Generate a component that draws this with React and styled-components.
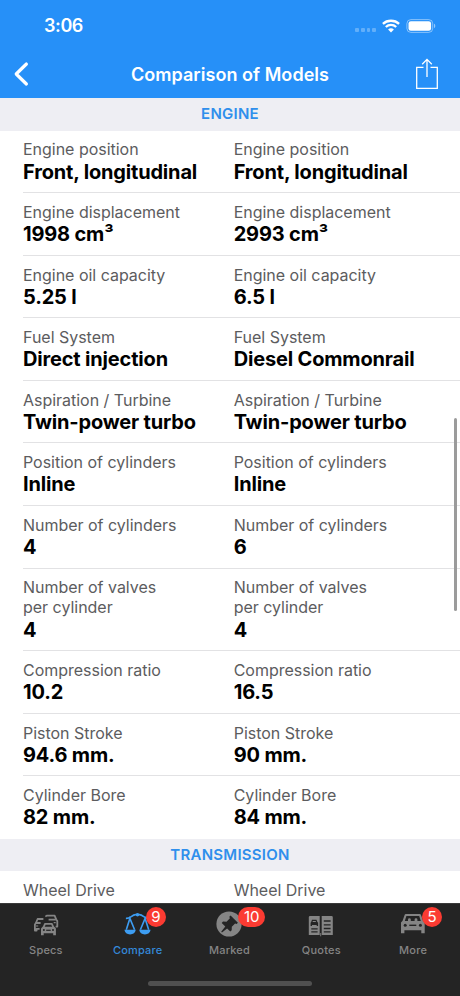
import styled, { createGlobalStyle } from "styled-components";

const engineRows = [
  { label: "Engine position", left: "Front, longitudinal", right: "Front, longitudinal" },
  { label: "Engine displacement", left: "1998 cm³", right: "2993 cm³" },
  { label: "Engine oil capacity", left: "5.25 l", right: "6.5 l" },
  { label: "Fuel System", left: "Direct injection", right: "Diesel Commonrail" },
  { label: "Aspiration / Turbine", left: "Twin-power turbo", right: "Twin-power turbo" },
  { label: "Position of cylinders", left: "Inline", right: "Inline" },
  { label: "Number of cylinders", left: "4", right: "6" },
  { label: "Number of valves per cylinder", left: "4", right: "4" },
  { label: "Compression ratio", left: "10.2", right: "16.5" },
  { label: "Piston Stroke", left: "94.6 mm.", right: "90 mm." },
  { label: "Cylinder Bore", left: "82 mm.", right: "84 mm." },
];

const transmissionRows = [{ label: "Wheel Drive", left: "", right: "" }];

const WifiIcon = () => (
  <svg width="18" height="14" viewBox="0 0 18 14" fill="none" stroke="#fff" strokeWidth="2.3">
    <path d="M0.9 4.9C5.3 0.7 12.7 0.7 17.1 4.9" />
    <path d="M3.8 8C6.8 5.2 11.2 5.2 14.2 8" />
    <path d="M6.1 10.4C7.8 8.8 10.2 8.8 11.9 10.4L9 13.4Z" fill="#fff" stroke="none" />
  </svg>
);

const BatteryIcon = () => (
  <svg width="30" height="14" viewBox="0 0 30 14">
    <rect x="0.9" y="0.6" width="25.8" height="12.8" rx="4" fill="none" stroke="#fff" strokeOpacity="0.45" />
    <rect x="2.5" y="2.2" width="22.6" height="9.6" rx="2.4" fill="#fff" />
    <path d="M28 4.8C29.7 5.3 29.7 8.7 28 9.2Z" fill="#fff" fillOpacity="0.5" />
  </svg>
);

const BackIcon = () => (
  <svg width="16" height="26" viewBox="0 0 16 26" fill="none" stroke="#fff" strokeWidth="3.2" strokeLinecap="round" strokeLinejoin="round">
    <path d="M13.4 3L3.2 13L13.4 23" />
  </svg>
);

const ShareIcon = () => (
  <svg width="24" height="32" viewBox="0 0 24 32" fill="none" stroke="#fff" strokeWidth="1.3">
    <path d="M8.5 9.3H1.7V30.3H22.3V9.3H15.5" />
    <path d="M12 19V1.4M7.2 6.2L12 1.4L16.8 6.2" />
  </svg>
);

const SpecsIcon = () => (
  <svg width="26" height="26" viewBox="0 0 26 26" fill="none">
    <g stroke="#858585" strokeWidth="1.8" strokeLinejoin="round">
      <path d="M12.4 5.6L13.7 4.6H21.6L23.2 8.4L24.3 10V15.6H22.6" />
      <path d="M10.4 8H4.6L2.9 12L1.9 13.5V19.6H3.6V17.8H6.6" />
      <path d="M2.9 12H7.6M15.6 8.6H22.8" />
      <path d="M10.4 16.6L12 12.9H18.9L20.5 16.6" />
    </g>
    <path d="M9.5 15.8H21.4L22.9 17.6V24.2H20.2V22.3H10.7V24.2H8V17.6Z" fill="#858585" />
    <circle cx="10.9" cy="19.1" r="1" fill="#242424" />
    <circle cx="20" cy="19.1" r="1" fill="#242424" />
    <path d="M13.2 19.3H17.7" stroke="#242424" strokeWidth="1.2" />
    <path d="M3 15H5.2M20.7 11.6H22.7" stroke="#858585" strokeWidth="1.2" />
  </svg>
);

const ScalesIcon = () => (
  <svg width="28" height="26" viewBox="0 0 28 26" fill="none">
    <path d="M1.9 7.4C6.2 7.8 7.6 4.1 11.7 3.7H15.3C19.4 4.1 20.8 7.8 25.1 7.4" stroke="#3d9df2" strokeWidth="1.7" />
    <circle cx="13.5" cy="3.8" r="1.7" fill="#3d9df2" />
    <path d="M2.3 18.8L5.9 7.4L10.6 18.8M16.4 18.8L21.1 7.4L24.7 18.8" stroke="#3d9df2" strokeWidth="1.6" />
    <path d="M0.4 18.8H11.8C11.3 21.9 9.3 23.4 6.1 23.4S0.9 21.9 0.4 18.8ZM15.2 18.8H26.6C26.1 21.9 24.1 23.4 20.9 23.4S15.7 21.9 15.2 18.8Z" fill="#3d9df2" />
  </svg>
);

const PinIcon = () => (
  <svg width="26" height="26" viewBox="0 0 26 26">
    <circle cx="13" cy="13" r="12.6" fill="#858585" />
    <path d="M14.6 4.5L21.9 11.8L20.6 13.1L19.1 12.5L15.8 15.8L15.7 19.3L14.3 20.5L11.1 17.4L6 21.5L5.2 20.7L9.3 15.6L5.7 12L7 10.6L10.5 10.7L13.9 7.3L13.3 5.8Z" fill="#242424" />
  </svg>
);

const QuotesIcon = () => (
  <svg width="26" height="26" viewBox="0 0 26 26">
    <path d="M2.1 5H11.7V24H0.8V6.1Q0.8 5 2.1 5ZM13.7 5H23.5Q24.8 5 24.8 6.2V24H13.7Z" fill="#858585" />
    <path d="M12.7 22V25.3" stroke="#858585" strokeWidth="0.9" />
    <path d="M4 8.8H8.5L9.4 11L10.1 11.8V14.9H8.7V14H4V14.9H2.6V11.8L3.2 11Z" fill="#242424" />
    <path d="M4.9 10H7.7L8 11.1H4.5Z" fill="#858585" />
    <path d="M3.3 17.8H9.6M3.3 20.9H9.6M15.8 10H22.6M15.8 13.8H22.6M15.8 17.5H22.6M15.8 20.9H22.6" stroke="#242424" strokeWidth="1.3" />
  </svg>
);

const CarIcon = () => (
  <svg width="26" height="26" viewBox="0 0 26 26">
    <path d="M5.8 3.1H19.8Q20.6 3.1 20.9 3.8L23 9.7L24.7 11.6V22.3H21.3V19.3H4.4V22.3H1V11.6L2.6 9.7L4.7 3.8Q5 3.1 5.8 3.1Z" fill="#858585" />
    <path d="M6.4 4.9H19.2L20.8 10H4.8Z" fill="#242424" />
    <path d="M8 10V8.6A1.4 1.4 0 1 1 10.8 8.6V10M14.6 10V8.6A1.4 1.4 0 1 1 17.4 8.6V10" fill="#858585" />
    <circle cx="5.2" cy="14.3" r="1.5" fill="#242424" />
    <circle cx="20.4" cy="14.3" r="1.5" fill="#242424" />
    <path d="M9.3 14.3H16.3" stroke="#242424" strokeWidth="1.4" />
  </svg>
);

const tabs = [
  { name: "Specs", icon: <SpecsIcon /> },
  { name: "Compare", icon: <ScalesIcon />, badge: "9", active: true },
  { name: "Marked", icon: <PinIcon />, badge: "10" },
  { name: "Quotes", icon: <QuotesIcon /> },
  { name: "More", icon: <CarIcon />, badge: "5" },
];

const Section = ({ title, rows }) => (
  <section>
    <SectionTitle>{title}</SectionTitle>
    {rows.map((row) => (
      <Row key={row.label}>
        <Cell>
          <Label>{row.label}</Label>
          <Value>{row.left}</Value>
        </Cell>
        <Cell>
          <Label>{row.label}</Label>
          <Value>{row.right}</Value>
        </Cell>
      </Row>
    ))}
  </section>
);

const App = () => {
  return (
    <>
      <GlobalStyle />
      <Screen>
        <Header>
          <StatusBar>
            <Clock>3:06</Clock>
            <StatusIcons>
              <Signal>
                <i />
                <i />
                <i />
                <i />
              </Signal>
              <WifiIcon />
              <BatteryIcon />
            </StatusIcons>
          </StatusBar>
          <NavBar>
            <NavButton aria-label="Back">
              <BackIcon />
            </NavButton>
            <Title>Comparison of Models</Title>
            <NavButton aria-label="Share" $end>
              <ShareIcon />
            </NavButton>
          </NavBar>
        </Header>

        <Content>
          <Section title="ENGINE" rows={engineRows} />
          <Section title="TRANSMISSION" rows={transmissionRows} />
          <ScrollThumb />
        </Content>

        <Footer>
          <TabBar>
            {tabs.map((tab) => (
              <Tab key={tab.name} $active={tab.active}>
                <IconBox>
                  {tab.icon}
                  {tab.badge && <Badge>{tab.badge}</Badge>}
                </IconBox>
                <span>{tab.name}</span>
              </Tab>
            ))}
          </TabBar>
          <HomeIndicator />
        </Footer>
      </Screen>
    </>
  );
};

const GlobalStyle = createGlobalStyle`
  * {
    box-sizing: border-box;
  }
  body {
    margin: 0;
    font-family: Inter, "Liberation Sans", sans-serif;
  }
`;

const Screen = styled.div`
  width: 460px;
  height: 996px;
  display: flex;
  flex-direction: column;
  background-color: #ffffff;
  overflow: hidden;
`;

const Header = styled.header`
  height: 98px;
  flex-shrink: 0;
  background-color: #2690f8;
  color: #ffffff;
`;

const StatusBar = styled.div`
  height: 50px;
  padding: 1px 24px 0 44px;
  display: flex;
  align-items: center;
  justify-content: space-between;
`;

const Clock = styled.div`
  font-size: 18px;
  font-weight: 600;
  letter-spacing: -0.4px;
`;

const StatusIcons = styled.div`
  display: flex;
  align-items: center;
  gap: 6px;
`;

const Signal = styled.div`
  display: flex;
  gap: 2px;
  padding-top: 9px;
  i {
    width: 3.7px;
    height: 4px;
    border-radius: 1px;
    background-color: rgba(255, 255, 255, 0.28);
  }
`;

const NavBar = styled.nav`
  height: 48px;
  padding: 0 21px 0 13px;
  display: grid;
  grid-template-columns: 49px 1fr 41px;
  align-items: center;
`;

const NavButton = styled.button`
  display: flex;
  justify-content: ${(props) => (props.$end ? "flex-end" : "flex-start")};
  padding: 0;
  border: none;
  background: none;
`;

const Title = styled.h1`
  margin: 0;
  text-align: center;
  font-size: 18px;
  font-weight: 600;
  letter-spacing: 0.05px;
`;

const Content = styled.main`
  position: relative;
  flex: 1;
  min-height: 0;
  overflow: hidden;
`;

const SectionTitle = styled.h2`
  height: 32.5px;
  margin: 0;
  background-color: #eeeef3;
  color: #2f8fec;
  text-align: center;
  font-size: 15px;
  font-weight: 600;
  line-height: 32px;
  letter-spacing: 0.25px;
`;

const Row = styled.div`
  margin-left: 23px;
  padding: 8.9px 0 8.5px;
  display: grid;
  grid-template-columns: 210.7px 1fr;
  border-bottom: 1px solid #e2e2e4;
  &:last-child {
    border-bottom-color: transparent;
  }
`;

const Cell = styled.div`
  width: 190px;
`;

const Label = styled.div`
  max-width: 160px;
  margin-bottom: 0.2px;
  color: #5c5c5e;
  font-size: 16px;
  line-height: 20px;
  letter-spacing: -0.02px;
`;

const Value = styled.div`
  min-height: 24px;
  color: #000000;
  font-size: 20px;
  font-weight: 700;
  line-height: 24px;
  letter-spacing: -0.17px;
  white-space: nowrap;
`;

const ScrollThumb = styled.div`
  position: absolute;
  top: 320px;
  right: 3px;
  width: 3px;
  height: 193px;
  border-radius: 2px;
  background-color: #9b9b9b;
`;

const Footer = styled.footer`
  height: 93px;
  flex-shrink: 0;
  display: flex;
  flex-direction: column;
  align-items: center;
  background-color: #242424;
  border-top: 1px solid #3a3a3a;
`;

const TabBar = styled.div`
  width: 100%;
  height: 77px;
  padding-right: 1px;
  display: grid;
  grid-template-columns: repeat(5, 1fr);
`;

const Tab = styled.div`
  display: flex;
  flex-direction: column;
  align-items: center;
  padding-top: 7px;
  color: ${(props) => (props.$active ? "#3489da" : "#858585")};
  font-size: 11px;
  font-weight: 500;
  line-height: 14px;
  letter-spacing: 0.2px;
`;

const IconBox = styled.div`
  position: relative;
  height: 32px;
  display: flex;
  align-items: flex-start;
  svg {
    display: block;
  }
`;

const Badge = styled.div`
  position: absolute;
  top: -4px;
  left: 22px;
  min-width: 20px;
  height: 20px;
  padding: 0 5.5px;
  border-radius: 10px;
  background-color: #fb3b32;
  color: #ffffff;
  text-align: center;
  font-size: 15px;
  font-weight: 400;
  line-height: 20px;
  letter-spacing: -0.1px;
`;

const HomeIndicator = styled.div`
  width: 164px;
  height: 5px;
  border-radius: 3px;
  background-color: #505050;
`;

export default App;
